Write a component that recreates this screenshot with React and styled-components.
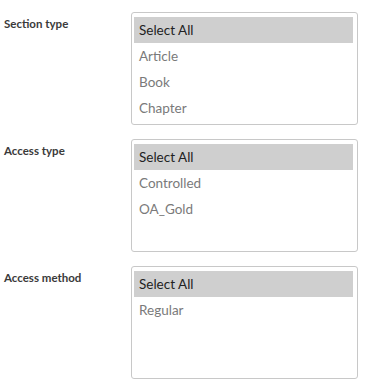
import styled, { createGlobalStyle } from "styled-components";

const Global = createGlobalStyle`
  body {
    margin: 0;
    background: #fff;
    font-family: Lato, "Open Sans", sans-serif;
  }
`;

const Page = styled.div`
  padding: 12px 19px 0 4px;
  display: flex;
  flex-direction: column;
  gap: 14px;
`;

const Field = styled.div`
  display: grid;
  grid-template-columns: 127px 227px;
  align-items: start;
`;

const Label = styled.div`
  font-size: 11.5px;
  font-weight: 700;
  color: #3a3a3a;
  padding-top: 5px;
`;

const ListBox = styled.div`
  box-sizing: border-box;
  height: 113px;
  border: 1px solid #c8c8c8;
  border-radius: 3px;
  padding: 4px 4px 4px 2px;
  display: flex;
  flex-direction: column;
`;

const Option = styled.div`
  height: 26px;
  line-height: 26px;
  padding-left: 5px;
  font-size: 13.5px;
  color: ${(p) => (p.$selected ? "#222" : "#7a7a7a")};
  background: ${(p) => (p.$selected ? "#cfcfcf" : "transparent")};
`;

const fields = [
  { label: "Section type", options: ["Article", "Book", "Chapter"] },
  { label: "Access type", options: ["Controlled", "OA_Gold"] },
  { label: "Access method", options: ["Regular"] },
];

export default function App() {
  return (
    <>
      <Global />
      <Page>
        {fields.map((f) => (
          <Field key={f.label}>
            <Label>{f.label}</Label>
            <ListBox>
              <Option $selected>Select All</Option>
              {f.options.map((o) => (
                <Option key={o}>{o}</Option>
              ))}
            </ListBox>
          </Field>
        ))}
      </Page>
    </>
  );
}
